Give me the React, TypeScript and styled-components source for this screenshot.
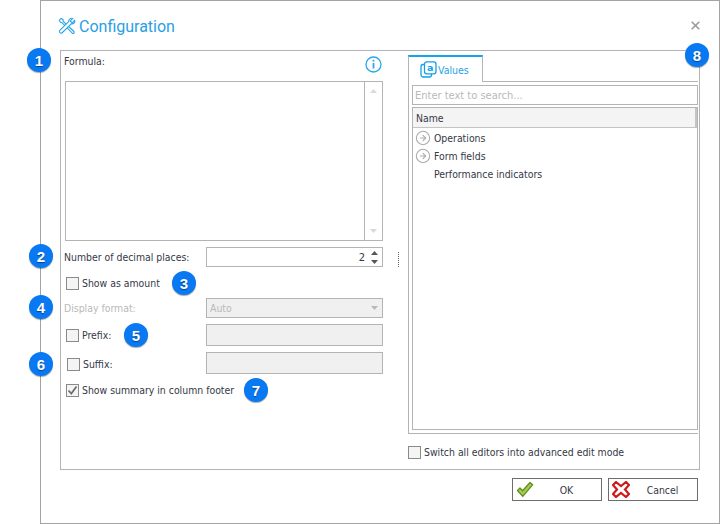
import React from "react";
import styled, { createGlobalStyle } from "styled-components";
import { CircleArrowRight } from "lucide-react";

const Global = createGlobalStyle`
  html, body { margin: 0; padding: 0; background: #fff; overflow: hidden; }
  body { font-family: "DejaVu Sans Condensed", "DejaVu Sans", sans-serif; }
`;

const Page = styled.div`
  position: relative;
  width: 720px;
  height: 524px;
  padding-left: 40px;
  box-sizing: border-box;
  font-size: 10.4px;
  color: #343846;
`;

const Dialog = styled.div`
  width: 680px;
  height: 524px;
  box-sizing: border-box;
  border: 1px solid #a3a3a3;
  display: flex;
  flex-direction: column;
  padding: 0 19px 0 19px;
`;

const Header = styled.div`
  height: 49px;
  display: flex;
  align-items: center;
  justify-content: space-between;
  padding: 1px 2px 0 0;
  margin-left: -2px;
  box-sizing: border-box;
`;

const TitleWrap = styled.div`
  display: flex;
  align-items: center;
  gap: 3px;
`;

const Title = styled.span`
  font-family: Roboto, sans-serif;
  font-size: 16px;
  color: #2aa0e4;
`;

const Close = styled.span`
  color: #9a9a9a;
  margin-right: -2px;
  margin-top: -2px;
  display: flex;
`;

const Panel = styled.div`
  height: 420px;
  border: 1px solid #b4b4b4;
  box-sizing: border-box;
  display: flex;
`;

const LeftCol = styled.div`
  width: 347px;
  padding-left: 4px;
  box-sizing: border-box;
  position: relative;
`;

const FormulaHead = styled.div`
  width: 318px;
  height: 30px;
  display: flex;
  justify-content: space-between;
  padding: 4px 0 0 0;
  box-sizing: border-box;
`;

const FormulaLabel = styled.span`
  margin-left: -1px;
`;

const InfoSlot = styled.span`
  display: flex;
  margin: 1px 1px 0 0;
`;

const TextArea = styled.div`
  width: 318px;
  height: 160px;
  border: 1px solid #b4b4b4;
  box-sizing: border-box;
  display: flex;
  justify-content: flex-end;
`;

const ScrollTrack = styled.div`
  width: 17px;
  border-left: 1px solid #b4b4b4;
  display: flex;
  flex-direction: column;
  align-items: center;
  justify-content: space-between;
  padding: 7px 0;
`;

const Row = styled.div<{ $top: number; $h: number }>`
  width: 318px;
  height: ${(p) => p.$h}px;
  margin-top: ${(p) => p.$top}px;
  display: flex;
  align-items: center;
  position: relative;
`;

const Label = styled.span<{ $w: number; $disabled?: boolean }>`
  white-space: nowrap;
  width: ${(p) => p.$w}px;
  flex: none;
  margin-left: -1px;
  padding-left: 0;
  margin-right: 1px;
  color: ${(p) => (p.$disabled ? "#b9b9b9" : "#343846")};
`;

const CheckGroup = styled.label<{ $w?: number; $shift?: number; $down?: number }>`
  display: flex;
  align-items: center;
  gap: 3px;
  white-space: nowrap;
  padding-left: ${(p) => p.$shift ?? 1}px;
  padding-top: ${(p) => p.$down ?? 0}px;
  box-sizing: border-box;
  ${(p) => (p.$w ? `width: ${p.$w}px; flex: none;` : "")}
`;

const Box = styled.span`
  width: 13px;
  height: 13px;
  box-sizing: border-box;
  border: 1px solid #8a8a8a;
  background: #f4f4f4;
  display: flex;
  align-items: center;
  justify-content: center;
  flex: none;
`;

const Field = styled.div<{ $disabled?: boolean; $w?: number }>`
  width: ${(p) => p.$w ?? 177}px;
  height: 100%;
  box-sizing: border-box;
  border: 1px solid #b4b4b4;
  background: ${(p) => (p.$disabled ? "#f0f0f0" : "#fff")};
  color: ${(p) => (p.$disabled ? "#b9b9b9" : "#343846")};
  display: flex;
  align-items: center;
  justify-content: space-between;
  padding: 0 4px 0 3px;
`;

const SpinValue = styled.span`
  margin-left: auto;
  font-size: 11px;
`;

const Spin = styled.span`
  display: flex;
  flex-direction: column;
  gap: 5px;
  margin: 0 0 0 6px;
`;

const Grip = styled.div`
  position: absolute;
  left: 333px;
  top: 5px;
  height: 15px;
  border-left: 1px dotted #666;
`;

const RightCol = styled.div`
  width: 290px;
  padding-top: 4px;
  box-sizing: border-box;
`;

const Pane = styled.div`
  height: 379px;
  box-sizing: border-box;
  border-left: 1px solid #b4b4b4;
  border-bottom: 1px solid #b4b4b4;
  display: flex;
  flex-direction: column;
`;

const TabStrip = styled.div`
  height: 27px;
  margin-left: -1px;
  display: flex;
  box-sizing: border-box;
  border-bottom: 1px solid #b4b4b4;
`;

const Tab = styled.div`
  width: 75px;
  height: 27px;
  box-sizing: border-box;
  border-top: 2px solid #12a5ec;
  border-left: 1px solid #b4b4b4;
  border-right: 1px solid #b4b4b4;
  background: #fff;
  display: flex;
  align-items: center;
  gap: 1px;
  padding: 0 0 0 11px;
  color: #2aa0e4;
  font-size: 10.5px;
`;

const PaneBody = styled.div`
  flex: 1;
  padding: 3px 0 3px 3px;
  display: flex;
  flex-direction: column;
  gap: 2px;
  min-height: 0;
`;

const Search = styled.div`
  height: 20px;
  box-sizing: border-box;
  border: 1px solid #b4b4b4;
  color: #b9b9b9;
  font-size: 11px;
  padding-left: 2px;
  display: flex;
  align-items: center;
`;

const Grid = styled.div`
  flex: 1;
  border: 1px solid #b4b4b4;
`;

const GridHead = styled.div`
  height: 20px;
  background: #f4f4f4;
  border-bottom: 1px solid #c4c4c4;
  border-right: 2px solid #c4c4c4;
  display: flex;
  align-items: center;
  padding-left: 3px;
  box-sizing: border-box;
`;

const TreeList = styled.div`
  padding-top: 1px;
`;

const TreeRow = styled.div`
  height: 18px;
  display: flex;
  align-items: center;
  padding-left: 2px;
  gap: 3px;
`;

const Arrow = styled.span`
  width: 16px;
  height: 16px;
  display: flex;
  color: #ababab;
  flex: none;
`;

const AdvancedRow = styled.div`
  height: 36px;
  display: flex;
  align-items: center;
`;

const Footer = styled.div`
  display: flex;
  justify-content: flex-end;
  gap: 6px;
  padding: 8px 2px 0 0;
`;

const Btn = styled.div`
  width: 90px;
  height: 23px;
  box-sizing: border-box;
  border: 1px solid #6e6e6e;
  display: flex;
  align-items: center;
  position: relative;
  padding-left: 3px;
  background: #fff;
`;

const BtnText = styled.span`
  flex: 1;
  text-align: center;
  padding-right: 2px;
`;

const Badge = styled.div<{ $x: number; $y: number }>`
  position: absolute;
  left: ${(p) => p.$x - 12}px;
  top: ${(p) => p.$y - 12}px;
  width: 24px;
  height: 24px;
  border-radius: 50%;
  background: #0879f2;
  box-shadow: 0 1px 1px rgba(0, 0, 0, 0.35);
  color: #fff;
  font-family: "Liberation Sans", sans-serif;
  font-size: 15px;
  font-weight: 700;
  text-shadow: 0 1px 1px rgba(0, 0, 0, 0.45);
  display: flex;
  align-items: center;
  justify-content: center;
`;

const Tri = ({ dir, color }: { dir: "up" | "down"; color: string }) => (
  <svg width="7" height="4" viewBox="0 0 7 4">
    <path d={dir === "up" ? "M3.5 0 7 4H0Z" : "M0 0h7L3.5 4Z"} fill={color} />
  </svg>
);

const InfoIcon = () => (
  <svg width="17" height="17" viewBox="0 0 17 17" fill="none" stroke="#2ba6ea">
    <circle cx="8.5" cy="8.5" r="7.500" strokeWidth="1.300" />
    <path d="M8.500 7v5.500" strokeWidth="1.800" />
    <path d="M8.500 3.800v1.800" strokeWidth="1.800" />
  </svg>
);

const ToolsIcon = () => (
  <svg width="18" height="18" viewBox="0 0 19 19" fill="none" stroke="#2ba6e6" strokeWidth="1.2">
    <path d="M1.5 3.2 3.2 1.5 5.2 2.6 5.6 4.6 16.8 15.3C17.8 16.5 16.3 18.1 15.1 17L4.2 6 2.4 5.4Z" />
    <path d="M17.6 3.6 15 6.2 13 4.2 15.5 1.6C13.4.8 11 2.3 11.3 4.9L1.9 14.2C.6 15.7 2.8 18 4.4 16.6L13.9 7.2C16.4 7.7 18.3 5.8 17.6 3.6Z" fill="#fff" />
  </svg>
);

const ValuesIcon = () => (
  <svg width="17" height="17" viewBox="0 0 17 17" fill="none" stroke="#12a0e8" strokeWidth="1.3">
    <rect x="1" y="3.5" width="10.5" height="12.5" rx="2.2" />
    <rect x="4.5" y="0.8" width="11.5" height="12" rx="2.2" fill="#fff" />
    <text x="10.2" y="10.4" fontSize="9.5" fontWeight="700" fontFamily="DejaVu Sans" fill="#12a0e8" stroke="none" textAnchor="middle">a</text>
  </svg>
);

const OkIcon = () => (
  <svg width="18" height="17" viewBox="0 0 18 17">
    <path d="M1.5 9.5 4 7l2.6 2.7L14 1.5l2.7 2.2-9.9 11.7Z" fill="#a8c957" stroke="#5f9016" strokeWidth="1.3" strokeLinejoin="round" />
  </svg>
);

const CancelIcon = () => (
  <svg width="18" height="17" viewBox="0 0 18 17">
    <path d="M4 1 9 5 14 1 17 4 13 8.500 17 13 14 16 9 12 4 16 1 13 5 8.500 1 4Z" fill="#fff" stroke="#cf1a1a" strokeWidth="2.2" strokeLinejoin="miter" />
  </svg>
);

const Check = ({ checked }: { checked?: boolean }) => (
  <Box>
    {checked && (
      <svg width="11" height="11" viewBox="0 0 11 11">
        <path d="M1.500 5.500 4.300 8.500 9.500 1.500" fill="none" stroke="#6f6f6f" strokeWidth="1.800" />
      </svg>
    )}
  </Box>
);

const BADGES: [string, number, number][] = [
  ["1", 39, 60],
  ["2", 41, 256],
  ["3", 184, 283],
  ["4", 41, 307],
  ["5", 136, 335],
  ["6", 41, 364],
  ["7", 256, 390],
  ["8", 697, 55],
];

export default function App() {
  return (
    <Page>
      <Global />
      <Dialog>
        <Header>
          <TitleWrap>
            <ToolsIcon />
            <Title>Configuration</Title>
          </TitleWrap>
          <Close>
            <svg width="9" height="9" viewBox="0 0 9 9">
              <path d="M.7.7l7.600 7.600M8.300.7.7 8.300" stroke="currentColor" strokeWidth="1.600" />
            </svg>
          </Close>
        </Header>
        <Panel>
          <LeftCol>
            <FormulaHead>
              <FormulaLabel>Formula:</FormulaLabel>
              <InfoSlot>
                <InfoIcon />
              </InfoSlot>
            </FormulaHead>
            <TextArea>
              <ScrollTrack>
                <Tri dir="up" color="#d9d9d9" />
                <Tri dir="down" color="#d9d9d9" />
              </ScrollTrack>
            </TextArea>
            <Row $top={6} $h={20}>
              <Label $w={141}>Number of decimal places:</Label>
              <Field>
                <SpinValue>2</SpinValue>
                <Spin>
                  <Tri dir="up" color="#555" />
                  <Tri dir="down" color="#555" />
                </Spin>
              </Field>
              <Grip />
            </Row>
            <Row $top={6} $h={20}>
              <CheckGroup>
                <Check />
                Show as amount
              </CheckGroup>
            </Row>
            <Row $top={5} $h={20}>
              <Label $w={141} $disabled>Display format:</Label>
              <Field $disabled>
                Auto
                <Tri dir="down" color="#b9b9b9" />
              </Field>
            </Row>
            <Row $top={6} $h={22}>
              <CheckGroup $w={141}>
                <Check />
                Prefix:
              </CheckGroup>
              <Field $disabled />
            </Row>
            <Row $top={6} $h={22}>
              <CheckGroup $w={141} $shift={2} $down={2}>
                <Check />
                Suffix:
              </CheckGroup>
              <Field $disabled />
            </Row>
            <Row $top={6} $h={20}>
              <CheckGroup>
                <Check checked />
                Show summary in column footer
              </CheckGroup>
            </Row>
          </LeftCol>
          <RightCol>
            <Pane>
              <TabStrip>
                <Tab>
                  <ValuesIcon />
                  Values
                </Tab>
              </TabStrip>
              <PaneBody>
                <Search>Enter text to search...</Search>
                <Grid>
                  <GridHead>Name</GridHead>
                  <TreeList>
                    <TreeRow>
                      <Arrow><CircleArrowRight size={16} strokeWidth={1.600} /></Arrow>
                      Operations
                    </TreeRow>
                    <TreeRow>
                      <Arrow><CircleArrowRight size={16} strokeWidth={1.600} /></Arrow>
                      Form fields
                    </TreeRow>
                    <TreeRow>
                      <Arrow />
                      Performance indicators
                    </TreeRow>
                  </TreeList>
                </Grid>
              </PaneBody>
            </Pane>
            <AdvancedRow>
              <CheckGroup $shift={0}>
                <Check />
                Switch all editors into advanced edit mode
              </CheckGroup>
            </AdvancedRow>
          </RightCol>
        </Panel>
        <Footer>
          <Btn><OkIcon /><BtnText>OK</BtnText></Btn>
          <Btn><CancelIcon /><BtnText>Cancel</BtnText></Btn>
        </Footer>
      </Dialog>
      {BADGES.map(([n, x, y]) => (
        <Badge key={n} $x={x} $y={y}>{n}</Badge>
      ))}
    </Page>
  );
}
